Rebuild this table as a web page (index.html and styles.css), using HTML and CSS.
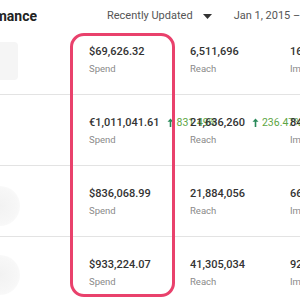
FILE: index.html
```html
<!DOCTYPE html>
<html>
<head>
<meta charset="utf-8">
<link rel="stylesheet" href="styles.css">
</head>
<body>
<div class="page">
  <div class="header">
    <div class="title"><span>Campaign Performance</span></div>
    <div class="sort">Recently Updated</div>
    <svg class="caret" width="9" height="5" viewBox="0 0 9 5"><path d="M0 0h9L4.5 5z" fill="#333"/></svg>
    <div class="date">Jan 1, 2015 – Dec 31, 2015</div>
  </div>

  <div class="row">
    <div class="thumb thumb-rect"></div>
    <div class="cell"><div class="value">$69,626.32</div><div class="label">Spend</div></div>
    <div class="cell"><div class="value">6,511,696</div><div class="label">Reach</div></div>
    <div class="cell"><div class="value">16,054,330</div><div class="label">Impressions</div></div>
  </div>

  <div class="row">
    <div class="thumb"></div>
    <div class="cell"><div class="value">€1,011,041.61<span class="change"><svg width="7" height="9" viewBox="0 0 7 9"><path d="M3.5 0.5L0.5 3.8h2.2V9h1.6V3.8h2.2z" fill="#2a8a5a"/></svg>831.49%</span></div><div class="label">Spend</div></div>
    <div class="cell"><div class="value">21,636,260<span class="change"><svg width="7" height="9" viewBox="0 0 7 9"><path d="M3.5 0.5L0.5 3.8h2.2V9h1.6V3.8h2.2z" fill="#2a8a5a"/></svg>236.47%</span></div><div class="label">Reach</div></div>
    <div class="cell"><div class="value">84,208,112</div><div class="label">Impressions</div></div>
  </div>

  <div class="row">
    <div class="thumb thumb-round"></div>
    <div class="cell"><div class="value">$836,068.99</div><div class="label">Spend</div></div>
    <div class="cell"><div class="value">21,884,056</div><div class="label">Reach</div></div>
    <div class="cell"><div class="value">66,497,820</div><div class="label">Impressions</div></div>
  </div>

  <div class="row">
    <div class="thumb thumb-round2"></div>
    <div class="cell"><div class="value">$933,224.07</div><div class="label">Spend</div></div>
    <div class="cell"><div class="value">41,305,034</div><div class="label">Reach</div></div>
    <div class="cell"><div class="value">92,113,508</div><div class="label">Impressions</div></div>
  </div>

  <div class="highlight"></div>
</div>
</body>
</html>
```

FILE: styles.css
```css
html, body {
  margin: 0;
  padding: 0;
  background: #fff;
}
body {
  font-family: Roboto, "Liberation Sans", sans-serif;
  color: #333;
  overflow: hidden;
}
.page {
  position: relative;
  width: 300px;
  height: 300px;
  overflow: hidden;
}
.header {
  height: 24px;
  box-sizing: border-box;
  padding-top: 8px;
  display: flex;
  align-items: center;
  white-space: nowrap;
  line-height: 16px;
}
.title {
  width: 37px;
  flex: none;
  display: flex;
  justify-content: flex-end;
  overflow: hidden;
  font-weight: 700;
  font-size: 14px;
  color: #222;
}
.title span { flex: none; }
.sort {
  margin-left: 70px;
  font-size: 11px;
  color: #555;
}
.caret {
  margin-left: 10px;
  flex: none;
}
.date {
  margin-left: 22px;
  font-size: 11px;
  color: #555;
}
.row {
  display: grid;
  grid-template-columns: 89px 101px 100px 100px;
  width: 390px;
  height: 70px;
  border-bottom: 1px solid #e3e3e3;
  white-space: nowrap;
}
.cell {
  padding-top: 21px;
  min-width: 0;
}
.value {
  font-size: 11px;
  line-height: 14px;
  color: #333;
  font-weight: 500;
}
.label {
  margin-top: 3px;
  font-size: 9.5px;
  line-height: 14px;
  color: #8a8a8a;
}
.change {
  margin-left: 7px;
  color: #5da544;
  font-weight: 400;
  font-size: 10.5px;
}
.change svg {
  margin-right: 3px;
  vertical-align: -1px;
}
.thumb { position: relative; }
.thumb-rect {
  margin-top: 18px;
  width: 18px;
  height: 38px;
  background: #f5f5f5;
  border-radius: 0 4px 4px 0;
}
.thumb-round {
  margin-top: 20px;
  margin-left: -20px;
  width: 40px;
  height: 40px;
  border-radius: 50%;
  background: radial-gradient(circle, #f2f2f2 0%, #f7f7f7 60%, #fff 100%);
}
.thumb-round2 {
  margin-top: 18px;
  margin-left: -20px;
  width: 40px;
  height: 40px;
  border-radius: 50%;
  background: radial-gradient(circle, #f2f2f2 0%, #f7f7f7 60%, #fff 100%);
}
.highlight {
  position: absolute;
  left: 70px;
  top: 33px;
  width: 99px;
  height: 258px;
  border: 3px solid #e9416c;
  border-radius: 14px;
}
```
